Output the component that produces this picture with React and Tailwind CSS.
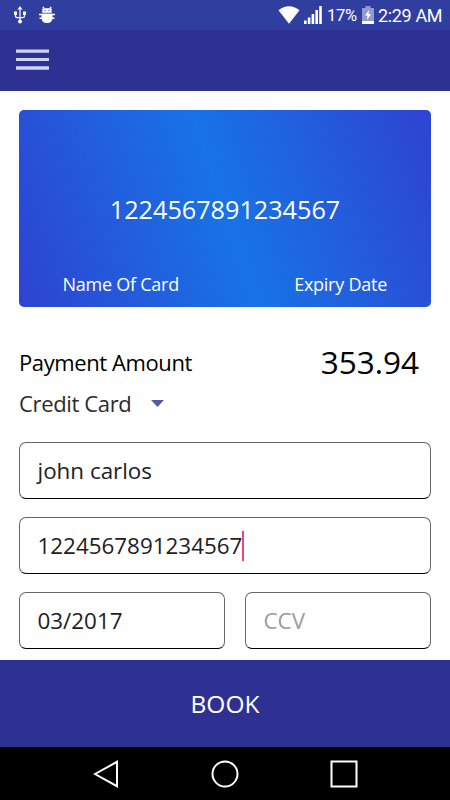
import React from "react";

function StatusBar() {
  return (
    <header className="flex h-[30px] shrink-0 items-center bg-[#303f9f] pr-2 pl-[14px] font-['Roboto',sans-serif] text-white">
      <svg width="12" height="18" viewBox="0 0 12 18" fill="none" stroke="#fff" strokeWidth="1.2">
        <path d="M6 3v11M1.5 7v3q0 1.7 2 1.7h5q2 0 2-1.7V7" />
        <path d="M6 0l2.5 3.5h-5zM0 5.5h3V9H0zM9 5.5h3V9H9z" fill="#fff" stroke="none" />
        <circle cx="6" cy="15.6" r="2" fill="#fff" stroke="none" />
      </svg>
      <svg className="ml-[13px]" width="16" height="18" viewBox="0 0 16 18">
        <path d="M4 .8l1.2 2M12 .8l-1.2 2M0 8.4h16M0.5 12.2h15" stroke="#fff" strokeWidth="1.5" fill="none" />
        <path d="M3.3 6.7V2.5Q5 3.2 5.5 2.2h5q.5 1 2.2.3v4.2zM2.5 7.7h11v3.8q0 5.5-5.5 5.5t-5.5-5.5z" fill="#fff" />
        <circle cx="6" cy="4.4" r=".6" fill="#303f9f" />
        <circle cx="10" cy="4.4" r=".6" fill="#303f9f" />
      </svg>
      <div className="flex-1" />
      <svg width="22" height="18" viewBox="0 0 22 18">
        <path d="M0.5 4.2Q11-3.7 21.5 4.2L11 17.7z" fill="#fff" />
      </svg>
      <svg className="ml-1" width="18" height="18" viewBox="0 0 18 18" fill="#fff">
        <path d="M0 14.5h2.6V18H0zM3.8 11.5h2.6V18H3.8zM7.6 8h2.6v10H7.6zM11.4 4H14v14h-2.6zM15.2 0h2.6v18h-2.6z" />
      </svg>
      <span className="ml-[5px] w-[30px] pt-[2px] text-[16.5px] leading-none tracking-[-0.3px] whitespace-nowrap">17%</span>
      <svg className="ml-[5px]" width="12" height="18" viewBox="0 0 12 18">
        <path d="M3.5 0h5v2H12v16H0V2h3.5z" fill="#929bd0" />
        <path d="M0 15h12v3H0z" fill="#fff" />
        <path d="M7 4L3 9.5h2.5L5 14l4-6H6.5z" fill="#fff" />
      </svg>
      <span className="ml-1 w-[64px] pt-px text-[18px] leading-none tracking-[-0.35px] whitespace-nowrap">2:29 AM</span>
    </header>
  );
}

function Toolbar() {
  return (
    <div className="flex h-[61px] shrink-0 items-start bg-[#2e3192] pt-[19px] pl-4">
      <button aria-label="Menu">
        <svg className="block" width="33" height="22" viewBox="0 0 33 22" fill="#ced2f5">
          <path d="M0 .4h33v3.4H0zM0 8.9h33v3.2H0zM0 17.3h33v3.4H0z" />
        </svg>
      </button>
    </div>
  );
}

function Field({ children, className = "" }) {
  return (
    <div
      className={`flex h-[57px] items-center rounded-[7px] border border-x-[#666] border-t-[#666] border-b-black pl-[17.5px] text-[22.4px] leading-none text-[#212121] ${className}`}
    >
      {children}
    </div>
  );
}

export default function App() {
  return (
    <div className="flex h-[800px] w-[450px] flex-col overflow-hidden bg-white font-['Open_Sans','Noto_Sans',sans-serif]">
      <StatusBar />
      <Toolbar />
      <main className="flex flex-1 flex-col px-[19px] pt-[19px]">
        <section className="flex h-[197px] shrink-0 flex-col rounded-[5px] bg-[linear-gradient(71deg,#2e43d1_0%,#1873e6_50%,#2e43d1_100%)] text-white">
          <div className="mt-[84px] flex h-[30px] items-center justify-center pt-[2px] text-[25.2px] leading-none">1224567891234567</div>
          <div className="mt-[49px] flex h-[22px] items-center justify-between pr-[44px] pl-[43.5px] text-[18px] leading-none tracking-[-0.25px]">
            <span>Name Of Card</span>
            <span>Expiry Date</span>
          </div>
        </section>
        <div className="mt-[35px] flex h-[40px] items-center justify-between pr-3 text-black">
          <span className="text-[22px] leading-none tracking-[-0.4px]">Payment Amount</span>
          <span className="text-[31.5px] leading-none">353.94</span>
        </div>
        <div className="mt-[6px] flex h-[30px] items-center text-[22px] leading-none text-[#2b2b2b]">
          <span className="w-[132px] tracking-[-0.35px]">Credit Card</span>
          <svg width="13" height="7" viewBox="0 0 13 7">
            <path d="M0 0h13L6.5 7z" fill="#5558a8" />
          </svg>
        </div>
        <div className="mt-[24px] flex flex-col gap-[18px]">
          <Field>
            <span className="pt-[2px]">john carlos</span>
          </Field>
          <Field>
            <span className="pt-[2px]">1224567891234567</span>
            <span className="h-[30px] w-[2px] bg-[#f0437f]" />
          </Field>
          <div className="flex justify-between">
            <Field className="w-[206px]">
              <span className="pt-[2px]">03/2017</span>
            </Field>
            <Field className="w-[186px]">
              <span className="pt-[2px] text-[#9b9b9b]">CCV</span>
            </Field>
          </div>
        </div>
      </main>
      <button className="flex h-[87px] shrink-0 items-center justify-center bg-[#2e3192] pt-[2px] text-[24.5px] leading-none text-white">
        BOOK
      </button>
      <nav className="flex h-[53px] shrink-0 items-center justify-between bg-black pr-[92px] pl-[93px]">
        <svg width="27" height="28" viewBox="0 0 27 28" fill="none" stroke="#fff" strokeWidth="2">
          <path d="M2 14L24 1.8v24.4z" />
        </svg>
        <svg width="28" height="28" viewBox="0 0 28 28" fill="none" stroke="#fff" strokeWidth="2">
          <circle cx="14" cy="14" r="12.5" />
        </svg>
        <svg width="28" height="28" viewBox="0 0 28 28" fill="none" stroke="#fff" strokeWidth="2">
          <path d="M1.5 1.5h25v25h-25z" />
        </svg>
      </nav>
    </div>
  );
}
